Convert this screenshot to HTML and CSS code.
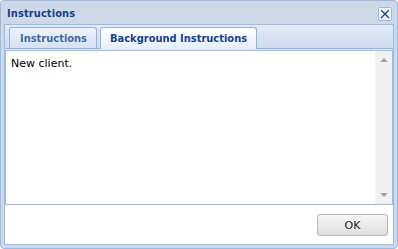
FILE: index.html
```html
<!DOCTYPE html>
<html>
<head>
<meta charset="utf-8">
<link rel="stylesheet" href="styles.css">
</head>
<body>
<div class="win">
  <div class="win-head">
    <span class="win-title">Instructions</span>
    <span class="tool-close"><svg width="10" height="10" viewBox="0 0 10 10"><path d="M1 1 L9 9 M9 1 L1 9" stroke="#15428b" stroke-width="1.3" fill="none"/></svg></span>
  </div>
  <div class="win-body">
    <div class="tabstrip">
      <div class="tab">Instructions</div>
      <div class="tab active">Background Instructions</div>
    </div>
    <div class="spacer"></div>
    <div class="textarea">
      <div class="text">New client.</div>
      <div class="sbar">
        <span class="arr up"></span>
        <span class="arr down"></span>
      </div>
    </div>
    <div class="footer">
      <button class="btn">OK</button>
    </div>
  </div>
</div>
</body>
</html>
```

FILE: styles.css
```css
html, body { margin: 0; padding: 0; background: #fff; }
body { font-family: "DejaVu Sans", Verdana, sans-serif; font-size: 11px; }

.win {
  box-sizing: border-box;
  width: 398px;
  height: 249px;
  border: 1px solid #99bbe8;
  border-radius: 4px;
  background: #ced9e7;
  padding: 0 3px 3px 3px;
  display: flex;
  flex-direction: column;
}

.win-head {
  height: 23px;
  display: flex;
  align-items: center;
  justify-content: space-between;
  padding: 0 2px 0 3px;
}
.win-title {
  font-family: "DejaVu Sans Condensed", "DejaVu Sans", sans-serif;
  font-weight: bold;
  font-size: 11px;
  color: #15428b;
  margin-top: 1px;
  letter-spacing: 0.1px;
}
.tool-close {
  box-sizing: border-box;
  width: 14px;
  height: 14px;
  border: 1px solid #99bbe8;
  border-radius: 2px;
  background: linear-gradient(#ffffff, #e4ecf7);
  display: flex;
  align-items: center;
  justify-content: center;
  margin-top: 2px;
}
.tool-close svg { display: block; }

.win-body {
  flex: 1;
  border: 1px solid #99bbe8;
  background: #fff;
  display: flex;
  flex-direction: column;
}

.tabstrip {
  height: 24px;
  box-sizing: border-box;
  padding: 3px 0 0 4px;
  background: linear-gradient(#e3ebf6, #cfdcef);
  border-bottom: 1px solid #8db2e3;
  display: flex;
  align-items: flex-end;
  gap: 3px;
}
.tab {
  box-sizing: border-box;
  height: 21px;
  border: 1px solid #8db2e3;
  border-bottom: none;
  border-radius: 3px 3px 0 0;
  background: linear-gradient(#eef3fa, #d5e2f2);
  color: #416aa3;
  font-family: "DejaVu Sans Condensed", "DejaVu Sans", sans-serif;
  font-weight: bold;
  font-size: 11px;
  padding: 4px 9px 0 10px;
  margin-bottom: 0;
}
.tab.active {
  height: 22px;
  margin-bottom: -1px;
  background: linear-gradient(#ffffff, #e4eefb);
  color: #15428b;
  padding: 4px 9px 0 9px;
}

.spacer { height: 1px; background: #deecfd; }

.textarea {
  height: 155px;
  box-sizing: border-box;
  border: 1px solid #99bbe8;
  display: flex;
}
.text {
  flex: 1;
  padding: 6px 0 0 5px;
  color: #000;
  font-size: 11px;
}
.sbar {
  width: 17px;
  background: #f0f0f0;
  position: relative;
}
.arr {
  position: absolute;
  left: 5px;
  width: 0;
  height: 0;
  border-left: 4px solid transparent;
  border-right: 4px solid transparent;
}
.arr.up { top: 7px; border-bottom: 4px solid #a3a3a3; }
.arr.down { bottom: 7px; border-top: 4px solid #a3a3a3; }

.footer {
  flex: 1;
  display: flex;
  justify-content: flex-end;
  align-items: flex-start;
  padding: 9px 5px 0 0;
}
.btn {
  box-sizing: border-box;
  width: 71px;
  height: 22px;
  border: 1px solid #b7b7b7;
  border-radius: 3px;
  background: linear-gradient(#f6f6f6, #dedede);
  font-family: "DejaVu Sans", sans-serif;
  font-size: 11px;
  color: #222;
  padding: 0;
}
```
